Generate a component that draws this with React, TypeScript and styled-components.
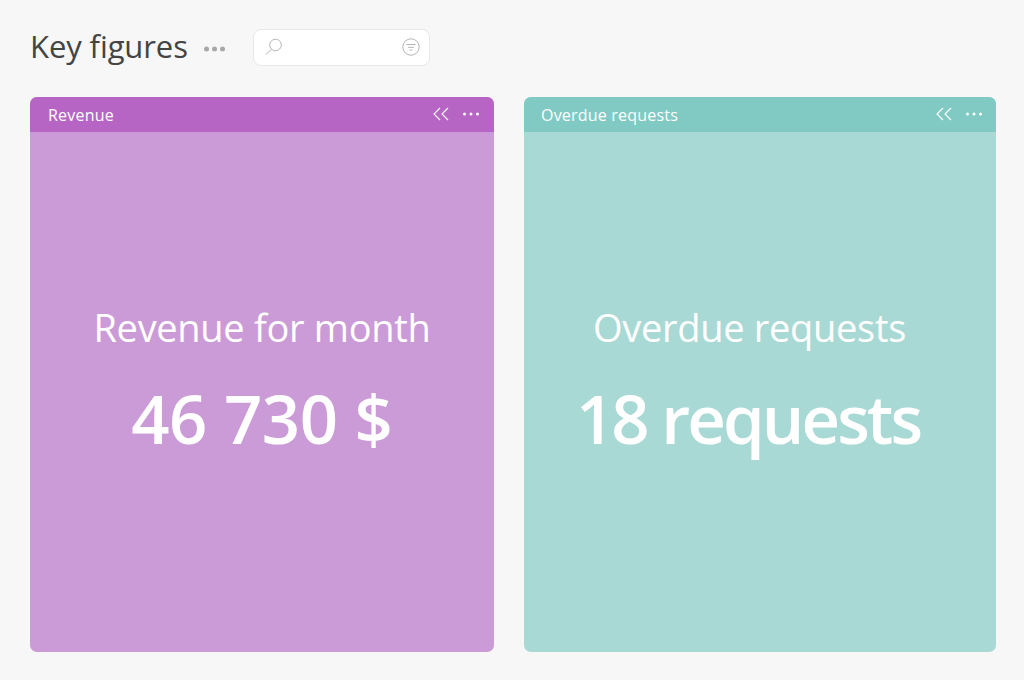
import React from 'react';
import styled, { createGlobalStyle } from 'styled-components';

const GlobalStyle = createGlobalStyle`
  html, body {
    margin: 0;
    height: 100%;
    background: #f7f7f7;
    font-family: "Open Sans", "Noto Sans", "Liberation Sans", sans-serif;
  }
`;

const Page = styled.div`
  width: 1024px;
  height: 680px;
  box-sizing: border-box;
  padding: 28px 28px 28px 30px;
  display: flex;
  flex-direction: column;
  gap: 31px;
  overflow: hidden;
`;

const Toolbar = styled.div`
  height: 38px;
  display: flex;
  align-items: center;
`;

const Title = styled.h1`
  margin: -2px 0 0;
  font-size: 31px;
  line-height: 38px;
  font-weight: 400;
  letter-spacing: -0.1px;
  color: #444444;
`;

const MoreButton = styled.span`
  display: flex;
  margin-left: 16px;
  margin-top: 4px;
  color: #a8a8a8;
`;

const Search = styled.div`
  width: 177px;
  height: 37px;
  box-sizing: border-box;
  margin-left: 28px;
  padding: 0 9px 0 11px;
  display: flex;
  align-items: center;
  justify-content: space-between;
  background: #ffffff;
  border: 1px solid #e8e8e8;
  border-radius: 8px;
`;

const Cards = styled.div`
  display: grid;
  grid-template-columns: 464px 472px;
  gap: 30px;
  height: 555px;
`;

const Card = styled.section<{ $tint: string }>`
  display: flex;
  flex-direction: column;
  background: ${(p) => p.$tint};
  border-radius: 7px;
  overflow: hidden;
`;

const CardHeader = styled.header<{ $color: string; $inset: number; $end: number }>`
  height: 35px;
  flex: none;
  box-sizing: border-box;
  padding: 0 ${(p) => p.$end}px 0 ${(p) => p.$inset}px;
  display: flex;
  align-items: center;
  justify-content: space-between;
  background: ${(p) => p.$color};
  color: #ffffff;
`;

const CardName = styled.span`
  font-size: 16px;
  letter-spacing: 0.2px;
`;

const CardActions = styled.div`
  display: flex;
  align-items: center;
  gap: 14px;
  margin-top: -1px;
`;

const CardBody = styled.div<{ $shift: number }>`
  flex: 1;
  box-sizing: border-box;
  padding: 167px ${(p) => p.$shift}px 0 0;
  display: flex;
  flex-direction: column;
  align-items: center;
  color: #ffffff;
`;

const Label = styled.div`
  font-size: 38px;
  line-height: 56px;
  font-weight: 400;
  letter-spacing: -0.3px;
`;

const Value = styled.div<{ $tracking: number }>`
  margin-top: 17px;
  margin-left: ${(p) => p.$tracking}px;
  font-size: 67px;
  line-height: 92px;
  font-weight: 600;
  letter-spacing: ${(p) => p.$tracking}px;
`;

const Dots = ({ size = 16, r = 1.5 }: { size?: number; r?: number }) => (
  <svg width={size} height="6" viewBox={`0 0 ${size} 6`} fill="currentColor">
    <circle cx={r} cy="3" r={r} />
    <circle cx={size / 2} cy="3" r={r} />
    <circle cx={size - r} cy="3" r={r} />
  </svg>
);

const Chevrons = () => (
  <svg width="16" height="14" viewBox="0 0 16 14" fill="none" stroke="currentColor" strokeWidth="1.1">
    <path d="M7 1 1 7l6 6" />
    <path d="M15 1 9 7l6 6" />
  </svg>
);

const SearchIcon = () => (
  <svg width="18" height="18" viewBox="0 0 18 18" fill="none" stroke="#b4b4b4" strokeWidth="1">
    <circle cx="10.5" cy="7" r="5.8" />
    <path d="M6.3 11.2 1 16.6" />
  </svg>
);

const FilterIcon = () => (
  <svg width="18" height="18" viewBox="0 0 18 18" fill="none" stroke="#b4b4b4" strokeWidth="1">
    <circle cx="9" cy="9" r="8.2" />
    <path d="M4.5 6.5h9M6 9.3h6M7.6 12h2.8" />
  </svg>
);

const cards = [
  {
    name: 'Revenue',
    color: '#b665c5',
    tint: '#cb9bd7',
    inset: 18,
    end: 15,
    shift: 0,
    label: 'Revenue for month',
    value: '46 730 $',
    tracking: -0.45,
  },
  {
    name: 'Overdue requests',
    color: '#80cac3',
    tint: '#a9d9d5',
    inset: 17,
    end: 14,
    shift: 21,
    label: 'Overdue requests',
    value: '18 requests',
    tracking: -2.9,
  },
];

export default function App() {
  return (
    <>
      <GlobalStyle />
      <Page>
        <Toolbar>
          <Title>Key figures</Title>
          <MoreButton>
            <Dots size={21} r={2.5} />
          </MoreButton>
          <Search>
            <SearchIcon />
            <FilterIcon />
          </Search>
        </Toolbar>
        <Cards>
          {cards.map((c) => (
            <Card key={c.name} $tint={c.tint}>
              <CardHeader $color={c.color} $inset={c.inset} $end={c.end}>
                <CardName>{c.name}</CardName>
                <CardActions>
                  <Chevrons />
                  <Dots />
                </CardActions>
              </CardHeader>
              <CardBody $shift={c.shift}>
                <Label>{c.label}</Label>
                <Value $tracking={c.tracking}>{c.value}</Value>
              </CardBody>
            </Card>
          ))}
        </Cards>
      </Page>
    </>
  );
}
